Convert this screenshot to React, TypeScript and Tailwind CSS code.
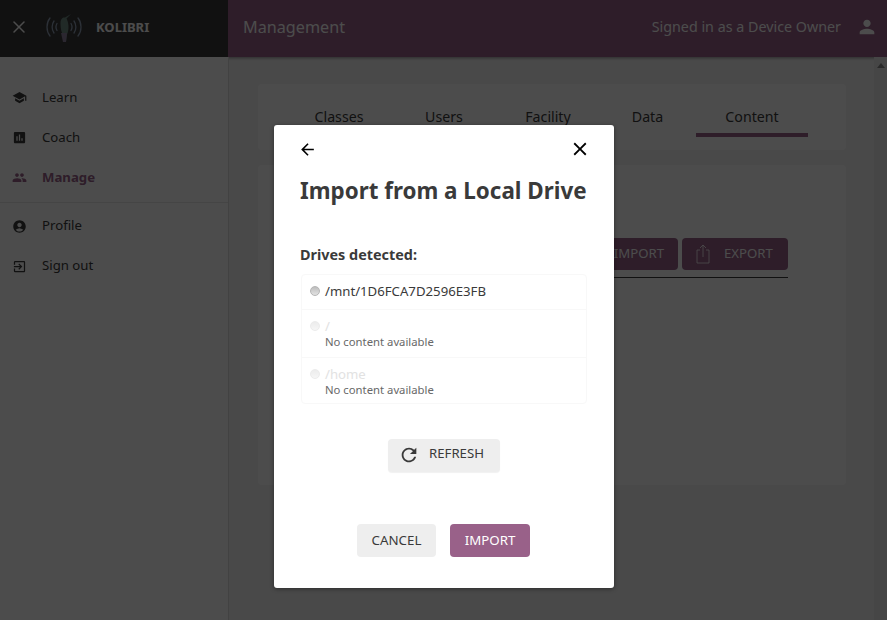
import { X } from 'lucide-react'
import { MdSchool, MdAssessment, MdPeople, MdAccountCircle, MdExitToApp, MdPerson, MdArrowBack, MdClose, MdRefresh } from 'react-icons/md'

const navTop = [
  { label: 'Learn', icon: MdSchool },
  { label: 'Coach', icon: MdAssessment },
  { label: 'Manage', icon: MdPeople, active: true },
]

const navBottom = [
  { label: 'Profile', icon: MdAccountCircle },
  { label: 'Sign out', icon: MdExitToApp },
]

const tabs = [
  { label: 'Classes', width: 'w-[104px]' },
  { label: 'Users', width: 'w-[106px]' },
  { label: 'Facility', width: 'w-[102px]' },
  { label: 'Data', width: 'w-[97px]' },
  { label: 'Content', width: 'w-[112px] border-b-4 border-[#996189]' },
]

const drives = [
  { path: '/mnt/1D6FCA7D2596E3FB', height: 'h-[35px]' },
  { path: '/', note: 'No content available', height: 'h-[48px]' },
  { path: '/home', note: 'No content available', height: 'h-[45px]' },
]

function KolibriLogo() {
  return (
    <svg width="38" height="30" viewBox="0 0 38 30" fill="none">
      <g stroke="#93a2b8" strokeWidth="1.3" strokeLinecap="round">
        <path d="M5 5C1 10 1 18 5 23" />
        <path d="M9 8c-2.500 3.500-2.500 8.500 0 12" />
        <path d="M12 10.500c-1.200 2-1.200 5 0 7" />
        <path d="M29 8c2.500 3.500 2.500 8.500 0 12" />
        <path d="M33 5c4 5 4 13 0 18" />
        <path d="M26 10.500c1.200 2 1.200 5 0 7" />
      </g>
      <path d="M26 1l-6 3.500c-3-.5-4.500 2-4.500 6 0 5 1 9 2.500 11l.5 7 2.500 0 1-7c1.500-3 2-8 1-12-.5-2-1-3-1.500-4z" fill="#6f8c84" />
      <path d="M16 20l2 9h3l1-9z" fill="#8f84a0" />
    </svg>
  )
}

function NavItem({ label, icon: Icon, active }: { label: string; icon: typeof MdSchool; active?: boolean }) {
  return (
    <div className={`flex h-10 items-center pl-[12px] text-[13.2px] ${active ? 'font-bold text-[#996189]' : 'text-[#3a3a3a]'}`}>
      <Icon className="mr-[15px] text-[15px]" />
      <span>{label}</span>
    </div>
  )
}

function PageBehind() {
  return (
    <div className="flex h-[620px] flex-col overflow-hidden bg-[#f5f5f5]">
      <header className="flex h-[57px] shrink-0 shadow-[0_1px_3px_rgba(0,0,0,0.4)]">
        <div className="flex w-[228px] items-center bg-[#3a3a3a] pb-[3px] pl-[9px] text-white">
          <X size={20} strokeWidth={1.8} />
          <div className="ml-[16px] mt-[2px]">
            <KolibriLogo />
          </div>
          <span className="ml-[13px] mt-[1px] text-[13px] font-bold">KOLIBRI</span>
        </div>
        <div className="flex flex-1 items-center justify-between bg-[#996189] pb-[3px] pl-[15px] pr-[9px] text-white">
          <span className="text-[16.2px]">Management</span>
          <div className="flex items-center">
            <span className="text-[14.3px]">Signed in as a Device Owner</span>
            <MdPerson className="ml-[15px] text-[22px]" />
          </div>
        </div>
      </header>

      <div className="flex flex-1">
        <aside className="w-[229px] shrink-0 border-r border-[#dddddd] bg-white pt-[20.5px]">
          {navTop.map((item) => (
            <NavItem key={item.label} {...item} />
          ))}
          <div className="mt-[4.5px] mb-[3px] border-t border-[#e6e6e6]" />
          {navBottom.map((item) => (
            <NavItem key={item.label} {...item} />
          ))}
        </aside>

        <main className="flex-1 pl-[29px] pr-[28px] pt-[27px]">
          <div className="h-[66px] rounded-sm bg-white pl-[29px] pt-[14px] text-[14.2px] text-[#3a3a3a]">
            <div className="flex">
              {tabs.map((tab) => (
                <div key={tab.label} className={`flex h-[39px] justify-center pt-[8px] ${tab.width}`}>
                  {tab.label}
                </div>
              ))}
            </div>
          </div>
          <div className="mt-[15px] h-[320px] rounded-sm bg-white pr-[58px] pt-[73px]">
            <div className="flex justify-end gap-[4px]">
              <div className="flex h-[32px] w-[90px] items-center justify-end rounded-sm bg-[#996189] pr-[14px] text-[13.2px] text-white">IMPORT</div>
              <div className="flex h-[32px] w-[106px] items-center rounded-sm bg-[#996189] pl-[14px] text-[13.2px] text-white">
                <svg width="14" height="20" viewBox="0 0 14 20" fill="none" stroke="currentColor" strokeWidth="0.8">
                  <path d="M4 6H1v13h12V6h-3M7 13V1M4 4l3-3 3 3" />
                </svg>
                <span className="ml-[14px]">EXPORT</span>
              </div>
            </div>
            <div className="ml-auto mt-[7px] w-[300px] border-t border-[#3a3a3a]" />
          </div>
        </main>

        <div className="flex w-[13px] shrink-0 justify-center bg-[#ececec] pt-[6px]">
          <div className="h-0 w-0 border-x-[4px] border-b-[5px] border-x-transparent border-b-[#8a8a8a]" />
        </div>
      </div>
    </div>
  )
}

function DriveRow({ path, note, height }: { path: string; note?: string; height: string }) {
  const disabled = Boolean(note)
  return (
    <div className={`flex border-b border-[#f8f8f8] pl-[8px] pt-[6px] last:border-b-0 ${height}`}>
      <span
        className={`mt-[5px] h-[10px] w-[10px] shrink-0 rounded-full border ${
          disabled
            ? 'border-[#ececec] bg-gradient-to-b from-[#ececec] to-[#f6f6f6]'
            : 'border-[#b5b5b5] bg-gradient-to-b from-[#bdbdbd] to-[#e2e2e2]'
        }`}
      />
      <div className="ml-[5px]">
        <div className={`text-[13.2px] leading-[20px] ${disabled ? 'text-[#e2e2e2]' : 'text-[#3a3a3a]'}`}>{path}</div>
        {note && <div className="-mt-[2px] text-[11.3px] leading-[16px] text-[#686868]">{note}</div>}
      </div>
    </div>
  )
}

function ImportDialog() {
  return (
    <div className="absolute inset-0 bg-black/70">
      <div className="absolute left-[274px] top-[125px] flex h-[463px] w-[340px] flex-col rounded-[3px] bg-white px-[26px] text-[#3a3a3a] shadow-[0_1px_4px_rgba(0,0,0,0.4)]">
        <div className="mt-[13px] flex items-center justify-between text-black">
          <MdArrowBack className="-ml-[2px] text-[19px]" />
          <MdClose className="-mr-[3px] text-[22px]" />
        </div>
        <h1 className="mt-[16px] whitespace-nowrap text-[22.4px] font-bold leading-[30px]">Import from a Local Drive</h1>
        <h2 className="mt-[39px] text-[14.4px] font-bold leading-[20px]">Drives detected:</h2>
        <div className="mx-[1px] mt-[9px] rounded-sm border border-[#f8f8f8]">
          {drives.map((drive) => (
            <DriveRow key={drive.path} {...drive} />
          ))}
        </div>
        <div className="mt-[35px] flex justify-center">
          <button className="flex h-[33px] w-[112px] items-center rounded-sm bg-[#eeeeee] pl-[11px] text-[13.2px] text-[#3a3a3a] shadow-[0_1px_1px_rgba(0,0,0,0.06)]">
            <MdRefresh className="-ml-[1px] mb-[1px] text-[22px]" />
            <span className="mb-[3px] ml-[9px]">REFRESH</span>
          </button>
        </div>
        <div className="mt-[52px] flex justify-center gap-[14px] pr-[1px]">
          <button className="h-[33px] w-[79px] rounded-sm bg-[#eeeeee] text-[13.3px] text-[#3a3a3a]">CANCEL</button>
          <button className="h-[33px] w-[80px] rounded-sm bg-[#996189] text-[13.3px] text-white">IMPORT</button>
        </div>
      </div>
    </div>
  )
}

export default function App() {
  return (
    <div className="relative h-[620px] w-[887px] overflow-hidden font-['Noto_Sans',sans-serif]">
      <PageBehind />
      <ImportDialog />
    </div>
  )
}
